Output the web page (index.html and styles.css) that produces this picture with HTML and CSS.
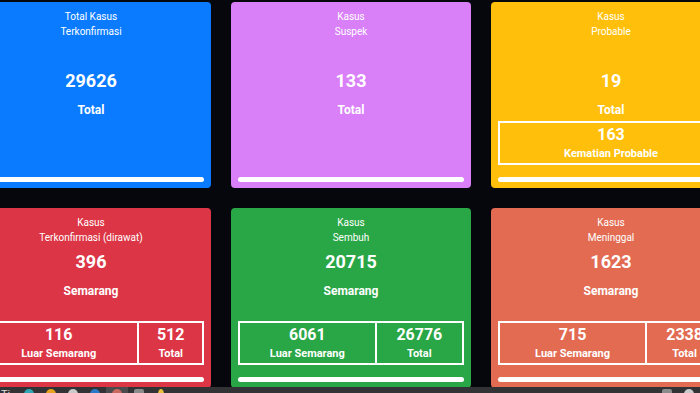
FILE: index.html
```html
<!DOCTYPE html>
<html lang="id">
<head>
<meta charset="utf-8">
<title>Dashboard Kasus</title>
<link rel="stylesheet" href="styles.css">
</head>
<body>
<div class="screen">
  <main class="board">
    <div class="grid">
      <section class="card blue top">
        <div class="title">Total Kasus<br>Terkonfirmasi</div>
        <div class="num">29626</div>
        <div class="lbl">Total</div>
        <div class="bar"></div>
      </section>
      <section class="card purple top">
        <div class="title">Kasus<br>Suspek</div>
        <div class="num">133</div>
        <div class="lbl">Total</div>
        <div class="bar"></div>
      </section>
      <section class="card yellow top">
        <div class="title">Kasus<br>Probable</div>
        <div class="num">19</div>
        <div class="lbl">Total</div>
        <table class="box">
          <tr>
            <td><div class="bnum">163</div><div class="blbl">Kematian Probable</div></td>
          </tr>
        </table>
        <div class="bar"></div>
      </section>

      <section class="card red">
        <div class="title">Kasus<br>Terkonfirmasi (dirawat)</div>
        <div class="num">396</div>
        <div class="lbl">Semarang</div>
        <table class="box">
          <tr>
            <td><div class="bnum">116</div><div class="blbl">Luar Semarang</div></td>
            <td><div class="bnum">512</div><div class="blbl">Total</div></td>
          </tr>
        </table>
        <div class="bar"></div>
      </section>
      <section class="card green">
        <div class="title">Kasus<br>Sembuh</div>
        <div class="num">20715</div>
        <div class="lbl">Semarang</div>
        <table class="box">
          <tr>
            <td><div class="bnum">6061</div><div class="blbl">Luar Semarang</div></td>
            <td><div class="bnum">26776</div><div class="blbl">Total</div></td>
          </tr>
        </table>
        <div class="bar"></div>
      </section>
      <section class="card orange">
        <div class="title">Kasus<br>Meninggal</div>
        <div class="num">1623</div>
        <div class="lbl">Semarang</div>
        <table class="box">
          <tr>
            <td><div class="bnum">715</div><div class="blbl">Luar Semarang</div></td>
            <td><div class="bnum">2338</div><div class="blbl">Total</div></td>
          </tr>
        </table>
        <div class="bar"></div>
      </section>
    </div>
  </main>
  <footer class="taskbar">
    <span class="search">Ti</span>
    <span class="slot"><i class="ico teal"></i></span>
    <span class="slot"><i class="ico amber"></i></span>
    <span class="slot"><i class="ico light"></i></span>
    <span class="slot"><i class="ico azure"></i></span>
    <span class="slot active"><i class="ico rose"></i></span>
    <span class="slot"><i class="ico grey"></i></span>
    <span class="slot"><i class="ico gold"></i></span>
    <span class="tray">
      <span class="slot"><i class="ico grey"></i></span>
      <span class="slot"><i class="ico light"></i></span>
    </span>
  </footer>
</div>
</body>
</html>
```

FILE: styles.css
```css
html, body {
  margin: 0;
  height: 100%;
}

body {
  background: #06070d;
  color: #fff;
  font-family: Roboto, "Liberation Sans", sans-serif;
  overflow: hidden;
}

.screen {
  height: 393px;
  display: flex;
  flex-direction: column;
}

.board {
  flex: 1;
  min-height: 0;
  overflow: hidden;
}

.grid {
  display: grid;
  grid-template-columns: repeat(3, 240px);
  column-gap: 20px;
  row-gap: 20px;
  margin-left: -29px;
  padding-top: 2px;
}

.card {
  display: flex;
  flex-direction: column;
  border-radius: 4px;
  padding: 7px 7px 6px;
  text-align: center;
}

.blue { background: #0a7bff; }
.purple { background: #d97ff8; }
.yellow { background: #ffbf0b; }
.red { background: #dc3545; }
.green { background: #29a645; }
.orange { background: #e26b52; }

.title {
  font-size: 10px;
  line-height: 15px;
}

.num {
  font-size: 18px;
  font-weight: 700;
  line-height: 22px;
  margin-top: 6px;
}

.top .num {
  margin-top: 31px;
}

.lbl {
  font-size: 12px;
  font-weight: 700;
  line-height: 16px;
  margin-top: 10px;
}

.box {
  width: 100%;
  border: 2px solid #fff;
  border-collapse: separate;
  border-spacing: 0;
  margin-top: 22px;
  margin-bottom: 12px;
}

.top .box {
  margin-top: 3px;
}

.box td {
  padding: 2px 1px 0;
  text-align: center;
}

.box td + td {
  border-left: 2px solid #fff;
}

.bnum {
  font-size: 16px;
  font-weight: 700;
  line-height: 20px;
}

.blbl {
  font-size: 11px;
  font-weight: 700;
  line-height: 18px;
}

.bar {
  height: 5px;
  border-radius: 3px;
  background: #fff;
  margin-top: auto;
}

.taskbar {
  height: 6px;
  flex: none;
  background: #333234;
  display: flex;
  overflow: hidden;
  font-size: 11px;
  line-height: 14px;
  color: #ddd;
}

.search {
  width: 17px;
  padding-left: 1px;
  margin-top: 1px;
}

.slot {
  width: 22px;
  display: flex;
  justify-content: center;
}

.slot.active {
  background: #4b4b4e;
}

.ico {
  width: 10px;
  height: 10px;
  border-radius: 50%;
  margin-top: 2px;
}

.teal { background: #2fa7b4; }
.amber { background: #e7a21f; }
.light { background: #c9c9c9; }
.azure { background: #2b78c6; }
.rose { background: #c9685f; }
.grey { background: #8b8b8b; border-radius: 2px; }
.gold { background: #e9c03c; width: 6px; }

.tray {
  margin-left: auto;
  display: flex;
}
```
